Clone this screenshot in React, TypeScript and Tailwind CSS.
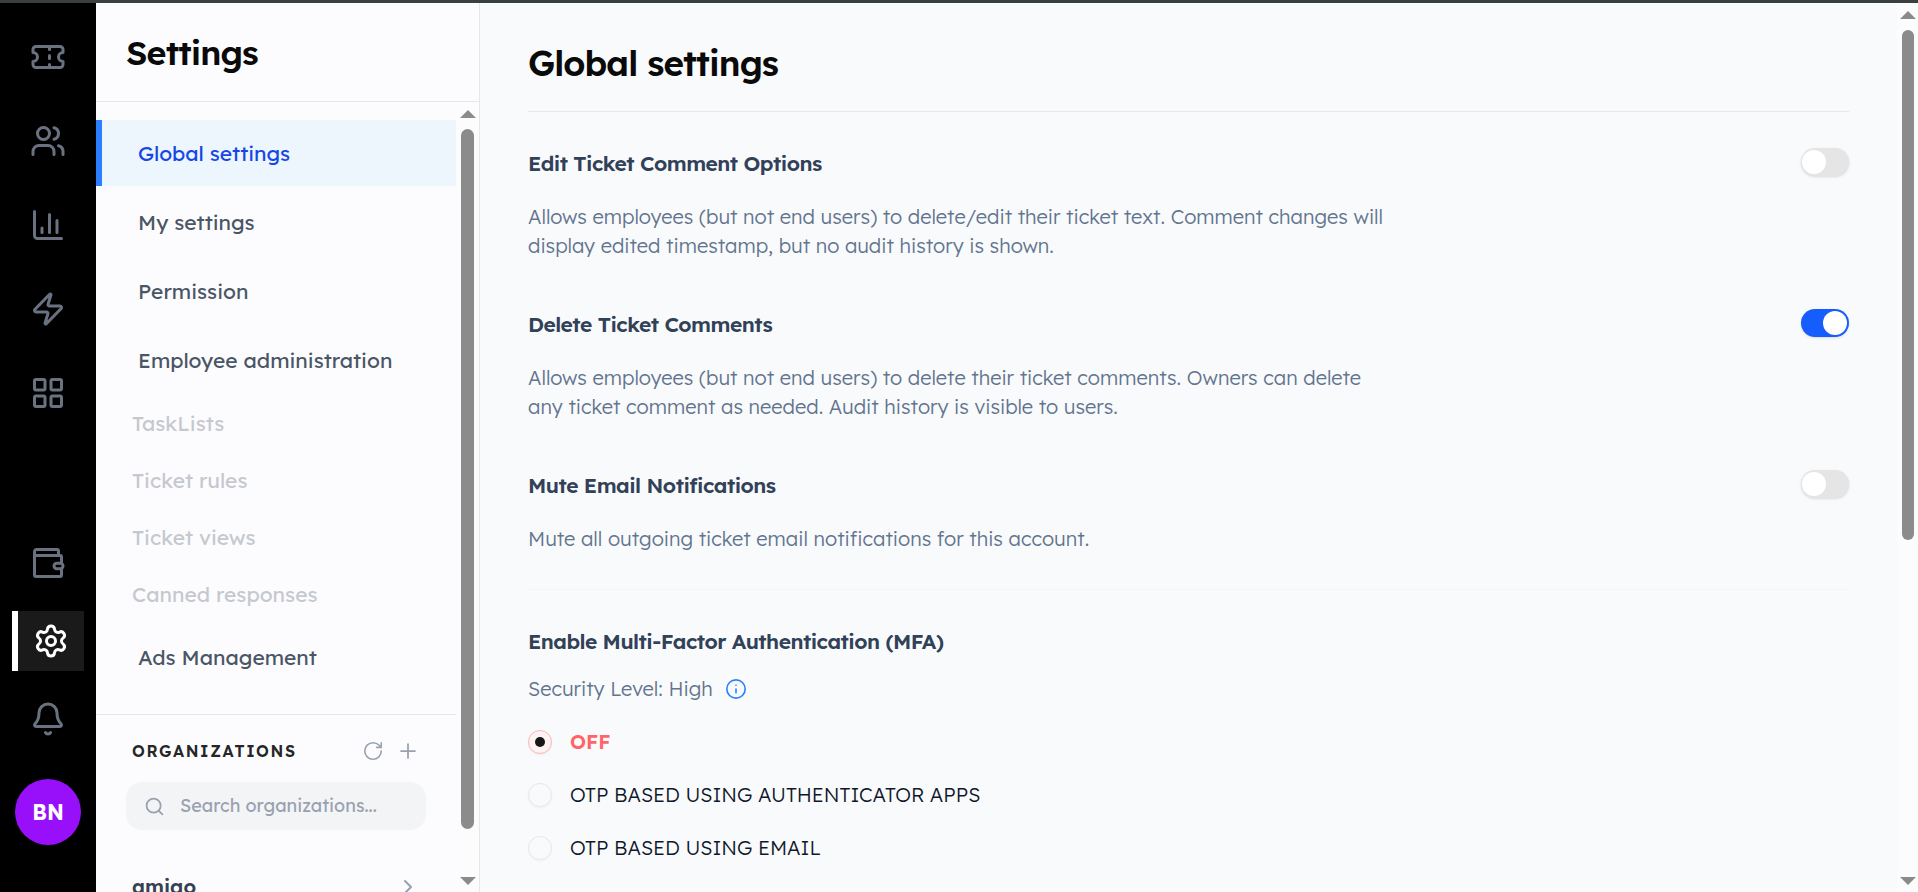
import { Bell, ChartColumn, ChevronRight, Info, LayoutGrid, Plus, RotateCw, Search, Settings, Ticket, Users, Zap } from "lucide-react";
import { clsx } from "clsx";

const mainLinks = [
    { label: "Tickets", icon: Ticket },
    { label: "Customers", icon: Users },
    { label: "Reports", icon: ChartColumn },
    { label: "Automations", icon: Zap },
    { label: "Apps", icon: LayoutGrid },
];

const menuItems = [
    { label: "Global settings", active: true },
    { label: "My settings" },
    { label: "Permission" },
    { label: "Employee administration" },
    { label: "TaskLists", disabled: true },
    { label: "Ticket rules", disabled: true },
    { label: "Ticket views", disabled: true },
    { label: "Canned responses", disabled: true },
    { label: "Ads Management" },
];

const options = [
    {
        id: "edit-comments",
        title: "Edit Ticket Comment Options",
        text: "Allows employees (but not end users) to delete/edit their ticket text. Comment changes will display edited timestamp, but no audit history is shown.",
        on: false,
    },
    {
        id: "delete-comments",
        title: "Delete Ticket Comments",
        text: "Allows employees (but not end users) to delete their ticket comments. Owners can delete any ticket comment as needed. Audit history is visible to users.",
        on: true,
    },
    {
        id: "mute-email",
        title: "Mute Email Notifications",
        text: "Mute all outgoing ticket email notifications for this account.",
        on: false,
    },
];

const mfaOptions = ["OFF", "OTP BASED USING AUTHENTICATOR APPS", "OTP BASED USING EMAIL"];

function WalletIcon() {
    return (
        <svg width="36" height="36" viewBox="0 0 24 24" fill="none" stroke="currentColor" strokeWidth="2" strokeLinecap="round" strokeLinejoin="round">
            <path d="M19 7V4a1 1 0 0 0-1-1H4.500a1.500 1.500 0 0 0-1.500 1.500V20a1 1 0 0 0 1 1h16a1 1 0 0 0 1-1v-4" />
            <path d="M3 7h17a1 1 0 0 1 1 1v4" />
            <rect x="16" y="12.200" width="6" height="3.600" rx="1.800" />
        </svg>
    );
}

function ScrollRail({ className, thumb }: { className?: string; thumb: string }) {
    return (
        <div className={clsx("flex shrink-0 flex-col items-center bg-[#fcfcfc] pt-2 pb-[7px]", className)} aria-hidden="true">
            <svg className="h-2 w-4 shrink-0" viewBox="0 0 16 8" fill="#8b8b8b"><path d="M8 0l8 8H0z" /></svg>
            <div className="my-[11px] w-full flex-1">
                <div className={clsx("mx-auto rounded-full bg-[#8b8b8b]", thumb)} />
            </div>
            <svg className="h-2 w-4 shrink-0" viewBox="0 0 16 8" fill="#8b8b8b"><path d="M0 0h16L8 8z" /></svg>
        </div>
    );
}

function NavRail() {
    return (
        <nav className="flex w-24 shrink-0 flex-col items-center justify-between bg-black pt-6 pb-[47px] text-gray-500">
            <div className="flex flex-col gap-6">
                {mainLinks.map(({ label, icon: Icon }) => (
                    <a key={label} href="#" aria-label={label} className="flex h-[60px] w-[72px] items-center justify-center">
                        <Icon size={36} />
                    </a>
                ))}
            </div>
            <div className="flex flex-col items-center gap-[18px]">
                <a href="#" aria-label="Billing" className="flex h-[60px] w-[72px] items-center justify-center">
                    <WalletIcon />
                </a>
                <a href="#" aria-label="Settings" className="flex h-[60px] w-[72px] items-center justify-center border-l-6 border-white bg-[#1a1a1a] text-white">
                    <Settings size={36} />
                </a>
                <button type="button" aria-label="Notifications" className="flex h-[60px] w-[72px] items-center justify-center">
                    <Bell size={36} />
                </button>
                <button type="button" className="mt-3 flex size-[66px] items-center justify-center rounded-full bg-[#9810fa] pt-0.5 text-[21px] font-bold text-white">
                    BN
                </button>
            </div>
        </nav>
    );
}

function Sidebar() {
    return (
        <aside className="flex w-96 shrink-0 flex-col border-r border-gray-200 bg-[#fcfcfe]">
            <header className="flex h-[99px] shrink-0 items-center border-b border-gray-200 px-[30px]">
                <h2 className="text-[34px] font-semibold tracking-tight text-neutral-950">Settings</h2>
            </header>
            <div className="flex min-h-0 flex-1">
                <div className="flex min-w-0 flex-1 flex-col overflow-hidden pt-[18px]">
                    <nav className="flex shrink-0 flex-col gap-[3px] border-b border-gray-200 pb-6">
                        {menuItems.map((item) => (
                            <a
                                key={item.label}
                                href="#"
                                aria-disabled={item.disabled}
                                className={clsx(
                                    "flex items-center pt-0.5 text-[21px]",
                                    item.active && "h-[66px] border-l-6 border-[#2b7fff] bg-[#edf5fd] pl-9 text-[#1447e6]",
                                    item.disabled && "h-[54px] pl-9 text-[#c5c8ce]",
                                    !item.active && !item.disabled && "h-[66px] pl-[42px] text-gray-600"
                                )}
                            >
                                {item.label}
                            </a>
                        ))}
                    </nav>
                    <section className="flex flex-col px-[30px] pt-[18px]">
                        <div className="flex h-9 items-center justify-between px-1.5">
                            <h3 className="text-base font-semibold tracking-widest text-neutral-800">ORGANIZATIONS</h3>
                            <div className="flex items-center gap-3 text-gray-400">
                                <button type="button" aria-label="Refresh"><RotateCw size={22} strokeWidth={1.75} /></button>
                                <button type="button" aria-label="Add organization"><Plus size={24} strokeWidth={1.75} /></button>
                            </div>
                        </div>
                        <label className="mt-[13px] flex h-12 items-center gap-[15px] rounded-2xl bg-gray-100 px-[18px]">
                            <Search size={21} className="text-gray-400" />
                            <input
                                type="text"
                                aria-label="Search organizations"
                                placeholder="Search organizations..."
                                className="min-w-0 flex-1 text-lg outline-none placeholder:text-gray-400"
                            />
                        </label>
                        <a href="#" className="mt-9 flex h-[42px] items-center justify-between px-1.5 text-xl font-semibold text-gray-700">
                            amigo
                            <ChevronRight size={24} className="text-gray-400" />
                        </a>
                    </section>
                </div>
                <ScrollRail className="w-[23px]" thumb="h-[95%] w-[13px]" />
            </div>
        </aside>
    );
}

export default function App() {
    return (
        <div className="flex h-screen overflow-hidden border-t-3 border-[#3a3f40] bg-[#f9fafc] font-['Lexend','Inter',sans-serif]">
            <NavRail />
            <Sidebar />
            <main className="min-w-0 flex-1 overflow-hidden px-12 pt-[34px]">
                <h1 className="border-b border-gray-200 pb-[22px] text-[35px] leading-[52px] font-semibold tracking-tight text-neutral-950">Global settings</h1>
                <div className="border-b border-gray-100 pt-9 pb-9">
                    <div className="flex flex-col gap-[49px]">
                        {options.map((option) => (
                            <section key={option.id} className="flex items-start justify-between">
                                <div className="max-w-[864px]">
                                    <label htmlFor={option.id} className="block text-[21px] leading-[30px] font-semibold tracking-tight text-slate-700">{option.title}</label>
                                    <p className="mt-6 text-xl leading-[29px] font-light text-slate-500">{option.text}</p>
                                </div>
                                <input
                                    id={option.id}
                                    type="checkbox"
                                    role="switch"
                                    defaultChecked={option.on}
                                    className="flex h-7 w-12 shrink-0 appearance-none items-center rounded-full bg-[#e5e5e5] px-px shadow-sm before:size-6 before:rounded-full before:bg-white checked:justify-end checked:bg-[#155dfc] checked:pr-0.5"
                                />
                            </section>
                        ))}
                    </div>
                </div>
                <fieldset className="pt-9">
                    <legend className="float-left w-full text-[21px] leading-[30px] font-semibold tracking-tight text-slate-700">Enable Multi-Factor Authentication (MFA)</legend>
                    <div className="clear-both flex items-center gap-3 pt-[15px] text-xl leading-[36px] font-light text-slate-500">
                        Security Level: High
                        <button type="button" aria-label="About security level" className="text-[#2b7fff]"><Info size={22} strokeWidth={1.75} /></button>
                    </div>
                    <div className="flex flex-col pt-2">
                        {mfaOptions.map((label, index) => (
                            <label key={label} className={clsx("flex h-[53px] items-center gap-[18px] text-xl", index === 0 ? "font-semibold text-[#ff6467]" : "font-light text-slate-900")}>
                                <input
                                    type="radio"
                                    name="mfa"
                                    defaultChecked={index === 0}
                                    className="flex size-6 shrink-0 appearance-none items-center justify-center rounded-full border border-gray-200 shadow-xs checked:border-[#ffb5b5] checked:bg-red-50 checked:before:size-2.5 checked:before:rounded-full checked:before:bg-neutral-900"
                                />
                                {label}
                            </label>
                        ))}
                    </div>
                </fieldset>
            </main>
            <ScrollRail className="w-[21px]" thumb="h-[61%] w-3" />
        </div>
    );
}
